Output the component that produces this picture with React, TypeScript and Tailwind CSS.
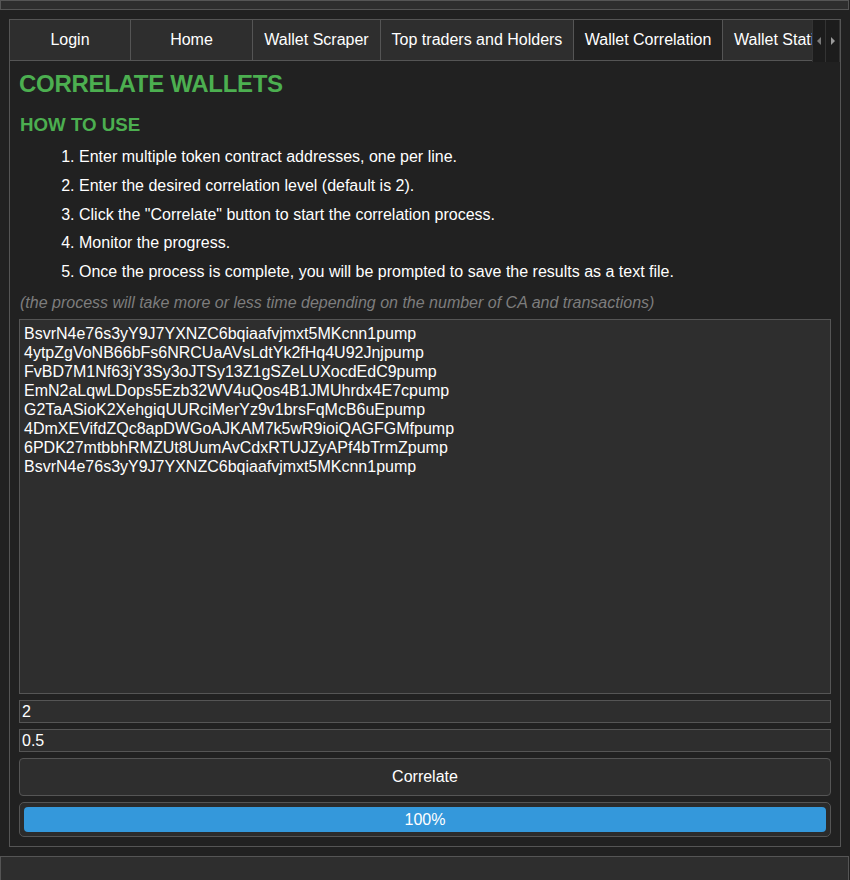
import React from "react";

const tabs = [
  { label: "Login", w: "w-[121px]" },
  { label: "Home", w: "w-[122px]" },
  { label: "Wallet Scraper", w: "w-[128px]" },
  { label: "Top traders and Holders", w: "w-[193px]" },
  { label: "Wallet Correlation", w: "w-[149px]", active: true },
  { label: "Wallet Statistics", w: "px-[11px]" },
];

const steps = [
  "Enter multiple token contract addresses, one per line.",
  "Enter the desired correlation level (default is 2).",
  'Click the "Correlate" button to start the correlation process.',
  "Monitor the progress.",
  "Once the process is complete, you will be prompted to save the results as a text file.",
];

const addresses = [
  "BsvrN4e76s3yY9J7YXNZC6bqiaafvjmxt5MKcnn1pump",
  "4ytpZgVoNB66bFs6NRCUaAVsLdtYk2fHq4U92Jnjpump",
  "FvBD7M1Nf63jY3Sy3oJTSy13Z1gSZeLUXocdEdC9pump",
  "EmN2aLqwLDops5Ezb32WV4uQos4B1JMUhrdx4E7cpump",
  "G2TaASioK2XehgiqUURciMerYz9v1brsFqMcB6uEpump",
  "4DmXEVifdZQc8apDWGoAJKAM7k5wR9ioiQAGFGMfpump",
  "6PDK27mtbbhRMZUt8UumAvCdxRTUJZyAPf4bTrmZpump",
  "BsvrN4e76s3yY9J7YXNZC6bqiaafvjmxt5MKcnn1pump",
];

export default function App() {
  return (
    <div className="h-[880px] overflow-hidden bg-[#212121] text-white font-['Liberation_Sans',Arial,sans-serif]">
      {/* top strip */}
      <div className="h-[10px] w-[849px] bg-[#2e2e2e] border border-[#555]" />

      {/* main frame */}
      <div className="mt-[9px] ml-[9px] w-[832px] h-[828px] border border-[#555] flex flex-col">
        {/* tab bar */}
        <div className="flex h-[41px] border-b border-[#555]">
          <div className="flex-1 flex overflow-hidden">
            {tabs.map((t) => (
              <div
                key={t.label}
                className={`${t.w} shrink-0 h-full flex items-center justify-center whitespace-nowrap border-r border-[#555] text-[16px] ${
                  t.active ? "bg-[#212121]" : "bg-[#2e2e2e]"
                }`}
              >
                {t.label}
              </div>
            ))}
          </div>
          <div className="flex shrink-0 -mb-[2px]">
            <div className="w-[14px] h-full bg-[#1c1c1c] border-x border-[#333] flex items-center justify-center">
              <svg width="6" height="8" viewBox="0 0 6 8">
                <path d="M5 0 L1 4 L5 8 Z" fill="#7a7a7a" />
              </svg>
            </div>
            <div className="w-[14px] h-full bg-[#1c1c1c] border-r border-[#333] flex items-center justify-center">
              <svg width="6" height="8" viewBox="0 0 6 8">
                <path d="M1 0 L5 4 L1 8 Z" fill="#9a9a9a" />
              </svg>
            </div>
          </div>
        </div>

        {/* panel */}
        <div className="flex-1 flex flex-col px-[9px] pt-[9px] pb-[8px]">
          <h2 className="text-[24px] leading-[27.6px] font-bold text-[#4caf50] tracking-[-0.3px]">
            CORRELATE WALLETS
          </h2>
          <h3 className="mt-[16px] text-[18.72px] leading-[21.5px] font-bold text-[#4caf50] ml-px">
            HOW TO USE
          </h3>
          <ol className="mt-[8px] list-decimal pl-[60px] text-[16px]">
            {steps.map((s) => (
              <li key={s} className="py-[5px] leading-[18.75px]">
                {s}
              </li>
            ))}
          </ol>
          <p className="mt-[7px] ml-px text-[16px] leading-[18.4px] italic text-[#7d7d7d]">
            (the process will take more or less time depending on the number of CA and transactions)
          </p>

          <div className="mt-[7px] h-[375px] bg-[#2e2e2e] border border-[#555] px-[4px] py-[4px] text-[16px] leading-[19px] whitespace-pre">
            {addresses.map((a, i) => (
              <div key={i}>{a}</div>
            ))}
          </div>

          <div className="mt-[6px] h-[23px] bg-[#2e2e2e] border border-[#555] px-[2px] flex items-center text-[16px]">
            2
          </div>
          <div className="mt-[6px] h-[23px] bg-[#2e2e2e] border border-[#555] px-[2px] flex items-center text-[16px]">
            0.5
          </div>

          <button className="mt-[6px] h-[38px] w-full bg-[#2e2e2e] border border-[#555] rounded-[4px] text-[16px] text-white">
            Correlate
          </button>

          <div className="mt-[6px] h-[35px] bg-[#2b2b2b] border border-[#555] rounded-[5px] p-[4px]">
            <div className="h-full w-full bg-[#3498db] rounded-[4px] flex items-center justify-center text-[16px]">
              100%
            </div>
          </div>
        </div>
      </div>

      {/* bottom strip */}
      <div className="mt-[9px] h-[30px] w-[849px] bg-[#2e2e2e] border border-[#555]" />
    </div>
  );
}
